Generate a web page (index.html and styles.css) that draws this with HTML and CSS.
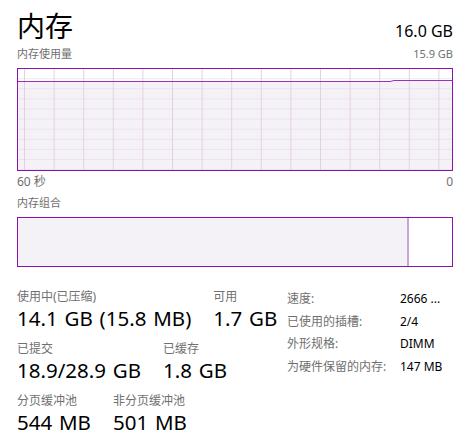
FILE: index.html
```html
<!DOCTYPE html>
<html lang="zh-CN">
<head>
  <meta charset="UTF-8">
  <title>内存</title>
  <link rel="stylesheet" href="styles.css">
</head>
<body>

  <div class="panel">

    <!-- Header -->
    <div class="head">
      <div class="title">内存</div>
      <div class="total">16.0 GB</div>
    </div>

    <div class="caption">
      <span>内存使用量</span>
      <span>15.9 GB</span>
    </div>

    <!-- Usage graph -->
    <div class="graph">
      <svg width="434" height="101" viewBox="0 0 434 101">
        <defs>
          <pattern id="grid" x="6" y="0" width="29.6" height="10.1" patternUnits="userSpaceOnUse">
            <path d="M0.5 0 V10.1 M0 10.1 H29.6" fill="none" stroke="#e4cfe9" stroke-width="1"/>
          </pattern>
        </defs>
        <path d="M0 12.5 H372 L376 11.5 H434 V101 H0 Z" fill="#f4f2f6"/>
        <rect width="434" height="101" fill="url(#grid)"/>
        <path d="M0 12.5 H372 L376 11.5 H434" fill="none" stroke="#9b30bb" stroke-width="1"/>
      </svg>
    </div>

    <div class="axis">
      <span>60 秒</span>
      <span>0</span>
    </div>

    <div class="caption">
      <span>内存组合</span>
    </div>

    <!-- Composition bar -->
    <div class="bar">
      <div class="bar-used" style="width: 389px;"></div>
    </div>

    <!-- Stats -->
    <div class="stats">
      <div class="stats-left">
        <div class="row">
          <div class="stat">
            <div class="label">使用中(已压缩)</div>
            <div class="value">14.1 GB (15.8 MB)</div>
          </div>
          <div class="stat">
            <div class="label">可用</div>
            <div class="value">1.7 GB</div>
          </div>
        </div>
        <div class="row">
          <div class="stat">
            <div class="label">已提交</div>
            <div class="value">18.9/28.9 GB</div>
          </div>
          <div class="stat">
            <div class="label">已缓存</div>
            <div class="value">1.8 GB</div>
          </div>
        </div>
        <div class="row">
          <div class="stat">
            <div class="label">分页缓冲池</div>
            <div class="value">544 MB</div>
          </div>
          <div class="stat">
            <div class="label">非分页缓冲池</div>
            <div class="value">501 MB</div>
          </div>
        </div>
      </div>

      <div class="props">
        <span class="key">速度:</span><span>2666 ...</span>
        <span class="key">已使用的插槽:</span><span>2/4</span>
        <span class="key">外形规格:</span><span>DIMM</span>
        <span class="key">为硬件保留的内存:</span><span>147 MB</span>
      </div>
    </div>

  </div>

</body>
</html>
```

FILE: styles.css
```css
body {
  margin: 0;
  background: #ffffff;
  color: #000000;
  font-family: "Noto Sans", "Noto Sans CJK SC", sans-serif;
}
.panel {
  width: 436px;
  padding: 6px 12px 0 17px;
}
.head {
  display: flex;
  justify-content: space-between;
  align-items: baseline;
}
.title {
  font-family: "Noto Sans CJK SC", sans-serif;
  font-size: 28px;
  line-height: 38px;
}
.total {
  font-size: 16px;
  line-height: 20px;
}
.caption, .axis {
  display: flex;
  justify-content: space-between;
  font-size: 11px;
  line-height: 16px;
  color: #707070;
}
.caption {
  margin-top: 2px;
}
.graph {
  border: 1px solid #8b12ae;
  height: 101px;
  margin-top: 6px;
}
.graph svg {
  display: block;
}
.axis {
  font-size: 12px;
  margin-top: 3px;
}
.axis + .caption {
  margin-top: 5px;
}
.bar {
  border: 1px solid #8b12ae;
  height: 48px;
  margin-top: 6px;
}
.bar-used {
  height: 100%;
  background: #f4f2f6;
  border-right: 2px solid #c7a8d3;
}
.stats {
  display: flex;
  justify-content: space-between;
  align-items: flex-start;
  margin-top: 22px;
}
.row {
  display: flex;
  gap: 22px;
  margin-bottom: 10px;
}
.label {
  font-size: 12px;
  line-height: 16px;
  color: #707070;
}
.value {
  font-size: 20.5px;
  line-height: 26px;
  word-spacing: 1.5px;
}
.props {
  display: grid;
  grid-template-columns: 113px 53px;
  grid-auto-rows: 22.7px;
  font-size: 12px;
  line-height: 16px;
  margin-top: 2px;
}
.props .key {
  color: #707070;
}
```
